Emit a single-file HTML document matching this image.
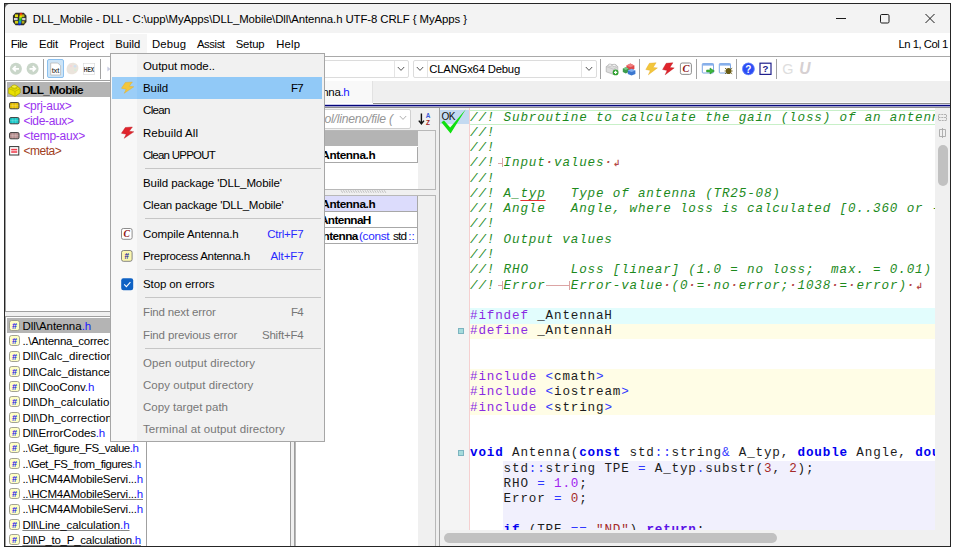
<!DOCTYPE html>
<html><head><meta charset="utf-8">
<style>
*{box-sizing:border-box;margin:0;padding:0}
html,body{width:956px;height:550px;overflow:hidden;background:#fff}
body{font-family:"Liberation Sans",sans-serif;font-size:11.3px;color:#000;position:relative}
.abs{position:absolute}
.t{position:absolute;white-space:nowrap;line-height:16px;height:16px}
#win{position:absolute;left:4px;top:3px;width:947px;height:544px;border:1px solid #262626;background:#fff;overflow:hidden}
#in{position:absolute;left:-5px;top:-4px;width:956px;height:550px}
.code{position:absolute;left:470px;top:109.8px;width:465px;height:421px;overflow:hidden;font-family:"Liberation Mono",monospace;font-size:12.6px;letter-spacing:0.84px;line-height:15.27px;white-space:pre;color:#1c1c1c}
.code .l{height:15.27px;position:relative;padding-top:0.8px}
.code i{font-style:italic;color:#1d8a1d}
.code b{font-weight:bold;color:#0000f0}
.code b.ret2{color:#5a14e6}
.c-pp{color:#8a2be2}.c-bl{color:#3038ff}.c-num{color:#a52a2a}.c-fl{color:#a020f0}.c-ws{color:#b44848;font-weight:bold}
svg{position:absolute;overflow:visible}
.code .cur{box-shadow:inset 0 1px 0 #c8f0c8, inset 0 -1px 0 #c8f0c8}
.code .cy{background:#e2fdfd}.code .ye{background:#fffde6}
.code .la{background:linear-gradient(#f1f0fd,#f1f0fd) no-repeat 32.8px 0}
.code u.tab{display:inline-block;width:8.4px;height:9px;text-decoration:none;position:relative;vertical-align:-1px}
.code u.tab:before{content:"";position:absolute;left:2.5px;right:0.6px;top:4.2px;height:0.9px;background:#dca4a4}
.code u.tab:after{content:"";position:absolute;right:0.6px;top:0;width:0.9px;height:9px;background:#dca4a4}
.code u.t3{width:25.2px}
.code u.t3:before{left:0.6px}
.code .sq{text-decoration:underline;text-decoration-color:#e83030;text-decoration-thickness:1px;text-underline-offset:3.2px;text-decoration-skip-ink:none}
.code .ret{font-style:normal;font-size:9px;font-family:"DejaVu Sans",sans-serif}

</style></head><body>
<div id="win"><div id="in">
<div class="abs" style="left:5px;top:4px;width:6px;height:6px;background:#6a6a6a;"></div>
<div class="abs" style="left:5px;top:4px;width:946px;height:29px;background:#f3f3f3;border-top-left-radius:5px"></div>
<svg style="left:11.8px;top:11.6px" width="15.6" height="14.4" viewBox="0 0 15 14">
<defs><linearGradient id="rb" x1="0" y1="0" x2="0" y2="1"><stop offset="0.05" stop-color="#e01010"/><stop offset=".3" stop-color="#f0e000"/><stop offset=".55" stop-color="#10d020"/><stop offset=".75" stop-color="#10a0e0"/><stop offset="0.95" stop-color="#1010e0"/></linearGradient></defs>
<path d="M3.4 0.8 H11.4 L14 3.6 V9.8 L11.4 12.8 H3.4 L0.8 9.8 V3.6 Z" fill="#2c2c2c"/>
<rect x="2.8" y="2.4" width="3" height="2.6" fill="#e6e010"/><rect x="9.4" y="2.4" width="2.6" height="2.6" fill="#b8b410"/>
<rect x="1.8" y="5.8" width="3.6" height="2.2" fill="#d4d4d4"/><rect x="9.8" y="5.8" width="3.2" height="2.2" fill="#d4d4d4"/>
<rect x="2.8" y="8.8" width="3" height="2.4" fill="#d8d010"/><rect x="9.4" y="8.8" width="2.6" height="2.4" fill="#b0a810"/>
<path d="M7.6 0.9 Q9.4 0.2 10 1.4 L8.6 12.2 Q7 13.6 6 12.4 Z" fill="url(#rb)"/>
</svg>
<div class="t" style="left:32.80px;top:11.00px;font-size:11.4px;letter-spacing:-0.093px;"><span style="color:#000;">DLL_Mobile - DLL - C:\upp\MyApps\DLL_Mobile\Dll\Antenna.h UTF-8 CRLF { MyApps }</span></div>
<svg style="left:830px;top:10px" width="116" height="18" viewBox="0 0 116 18">
<path d="M6 8.5 H16" stroke="#1a1a1a" stroke-width="1" fill="none"/>
<rect x="50.5" y="4.5" width="8.5" height="8.5" rx="1.2" stroke="#1a1a1a" stroke-width="1" fill="none"/>
<path d="M95.5 4 L104.5 13 M104.5 4 L95.5 13" stroke="#1a1a1a" stroke-width="1" fill="none"/>
</svg>
<div class="abs" style="left:5px;top:33px;width:946px;height:23px;background:#fff;"></div>
<div class="abs" style="left:109.5px;top:33.5px;width:37.5px;height:22px;background:#f5f5f5;"></div>
<div class="abs" style="left:5px;top:56px;width:946px;height:1px;background:#a9a9a9;"></div>
<div class="t" style="left:10.70px;top:35.80px;font-size:11.6px;letter-spacing:-0.597px;"><span style="color:#000;">File</span></div>
<div class="t" style="left:39.10px;top:35.80px;font-size:11.3px;letter-spacing:-0.157px;"><span style="color:#000;">Edit</span></div>
<div class="t" style="left:69.60px;top:35.80px;font-size:11.3px;letter-spacing:-0.112px;"><span style="color:#000;">Project</span></div>
<div class="t" style="left:115.20px;top:35.80px;font-size:11.3px;letter-spacing:-0.007px;"><span style="color:#000;">Build</span></div>
<div class="t" style="left:152.00px;top:35.80px;font-size:11.3px;letter-spacing:0.175px;"><span style="color:#000;">Debug</span></div>
<div class="t" style="left:197.00px;top:35.80px;font-size:11.3px;letter-spacing:-0.427px;"><span style="color:#000;">Assist</span></div>
<div class="t" style="left:235.80px;top:35.80px;font-size:11.3px;letter-spacing:-0.208px;"><span style="color:#000;">Setup</span></div>
<div class="t" style="left:276.30px;top:35.80px;font-size:11.3px;letter-spacing:0.153px;"><span style="color:#000;">Help</span></div>
<div class="t" style="left:898.50px;top:35.80px;font-size:11.3px;letter-spacing:-0.485px;"><span style="color:#000;">Ln 1, Col 1</span></div>
<div class="abs" style="left:5px;top:57px;width:946px;height:23.5px;background:#fff;"></div>
<svg style="left:9px;top:62px" width="32" height="14" viewBox="0 0 32 14">
<circle cx="6.9" cy="6.8" r="6" fill="#c9d6c9"/><path d="M10 6.8 H4.6 M6.8 4.2 L4.2 6.8 L6.8 9.4" stroke="#fff" stroke-width="1.8" fill="none"/>
<circle cx="23.6" cy="6.8" r="6" fill="#c9d6c9"/><path d="M20.5 6.8 H25.9 M23.7 4.2 L26.3 6.8 L23.7 9.4" stroke="#fff" stroke-width="1.8" fill="none"/>
</svg>
<div class="abs" style="left:43px;top:59px;width:1px;height:19.5px;background:#a2a2a2;"></div>
<div class="abs" style="left:47px;top:59px;width:16.8px;height:19px;background:#cce4f7;border:1px solid #8cc0ee;border-radius:2px"></div>
<svg style="left:50px;top:62px" width="12" height="14" viewBox="0 0 12 14">
<path d="M0.7 1 H7.8 L10.6 3.8 V13 H0.7 Z" fill="#fff" stroke="#b8b8b8" stroke-width="0.8"/>
<text x="5.4" y="10.6" font-family="Liberation Sans,sans-serif" font-size="7.8" text-anchor="middle" fill="#222" letter-spacing="-0.35">txt</text></svg>
<svg style="left:66px;top:62px" width="13" height="13" viewBox="0 0 13 13">
<path d="M6.5 0.8 C10 0.8 12.4 3 12.4 6 C12.4 9.6 9.4 12.3 5.8 12.3 C3 12.3 0.6 10.6 0.6 7.4 C0.6 3.6 3.2 0.8 6.5 0.8 Z" fill="#ebe4dc"/>
<circle cx="9" cy="4.2" r="1.3" fill="#cfe0f2"/><circle cx="5" cy="4" r="1.2" fill="#f3d9d9"/><circle cx="9.3" cy="8" r="1.2" fill="#d9ecd9"/></svg>
<svg style="left:83px;top:62.6px" width="12" height="12" viewBox="0 0 12 12">
<rect x="0.3" y="0.3" width="11.4" height="11" fill="#fff" stroke="#d8d8d8" stroke-width="0.6"/>
<text x="0.8" y="9" font-family="Liberation Sans,sans-serif" font-size="8" font-weight="bold" fill="#333" textLength="10.4" lengthAdjust="spacingAndGlyphs">HEX</text></svg>
<div class="abs" style="left:100px;top:59px;width:1px;height:19.5px;background:#a2a2a2;"></div>
<svg style="left:106.6px;top:66.4px" width="4" height="6" viewBox="0 0 4 6"><path d="M0.4 0.4 L3.4 3 L0.4 5.6 Z" fill="#c8cbe0"/></svg>
<div class="abs" style="left:300px;top:59.5px;width:108.5px;height:18.5px;background:#fff;border:1px solid #dcdcdc;border-radius:2px"></div>
<div class="abs" style="left:393.5px;top:60.5px;width:1px;height:16.5px;background:#e4e4e4;"></div>
<svg style="left:397px;top:66px" width="8" height="6" viewBox="0 0 8 6"><path d="M0.8 1 L4 4.4 L7.2 1" stroke="#555" stroke-width="1" fill="none"/></svg>
<div class="abs" style="left:412.5px;top:59.5px;width:184.5px;height:18.5px;background:#fff;border:1px solid #dcdcdc;border-radius:2px"></div>
<div class="abs" style="left:427px;top:60.5px;width:1px;height:16.5px;background:#e4e4e4;"></div>
<svg style="left:416px;top:66px" width="8" height="6" viewBox="0 0 8 6"><path d="M0.8 1 L4 4.4 L7.2 1" stroke="#555" stroke-width="1" fill="none"/></svg>
<div class="t" style="left:429.30px;top:60.80px;font-size:11.3px;letter-spacing:-0.207px;"><span style="color:#000;">CLANGx64 Debug</span></div>
<div class="abs" style="left:581.3px;top:60.5px;width:1px;height:16.5px;background:#e4e4e4;"></div>
<svg style="left:585px;top:66px" width="8" height="6" viewBox="0 0 8 6"><path d="M0.8 1 L4 4.4 L7.2 1" stroke="#555" stroke-width="1" fill="none"/></svg>
<div class="abs" style="left:600.2px;top:59px;width:1px;height:19.5px;background:#a2a2a2;"></div>
<div class="abs" style="left:639.4px;top:59px;width:1px;height:19.5px;background:#a2a2a2;"></div>
<div class="abs" style="left:696.4px;top:59px;width:1px;height:19.5px;background:#a2a2a2;"></div>
<div class="abs" style="left:736px;top:59px;width:1px;height:19.5px;background:#a2a2a2;"></div>
<div class="abs" style="left:776px;top:59px;width:1px;height:19.5px;background:#a2a2a2;"></div>
<svg style="left:605px;top:62px" width="210" height="14" viewBox="0 0 210 14">
<!-- gray brick + green plus -->
<path d="M1.2 4.6 L4.4 2.4 L10.6 2.6 L12.8 4.6 V9.6 L8.4 12.4 L1.2 9.8 Z" fill="#dcdcdc" stroke="#a4a4a4" stroke-width="0.6"/>
<path d="M1.2 4.6 L8.4 7.2 L12.8 4.6 M8.4 7.2 V12.4" stroke="#b4b4b4" stroke-width="0.5" fill="none"/>
<ellipse cx="5" cy="3.2" rx="1.9" ry="1.2" fill="#f2f2f2" stroke="#a8a8a8" stroke-width="0.5"/><ellipse cx="9.2" cy="3.4" rx="1.9" ry="1.2" fill="#f2f2f2" stroke="#a8a8a8" stroke-width="0.5"/>
<circle cx="10.6" cy="10.4" r="2.9" fill="#2ea02e"/><path d="M9 10.4 H12.2 M10.6 8.8 V12" stroke="#fff" stroke-width="1.1"/>
<!-- color bricks -->
<path d="M21.4 3.4 L25.4 1.6 L29.4 3.4 V7 L25.4 8.8 L21.4 7 Z" fill="#e04848"/><path d="M21.4 3.4 L25.4 1.6 L29.4 3.4 L25.4 5.2 Z" fill="#f08080"/>
<path d="M17.8 6.6 L20.8 5.2 L23.6 6.6 V10 L20.8 11.4 L17.8 10 Z" fill="#3c9c4c"/><path d="M17.8 6.6 L20.8 5.2 L23.6 6.6 L20.8 8 Z" fill="#78c888"/>
<path d="M22.8 8.4 L26.6 6.8 L30.4 8.4 V12 L26.6 13.6 L22.8 12 Z" fill="#3c78d0"/><path d="M22.8 8.4 L26.6 6.8 L30.4 8.4 L26.6 10 Z" fill="#80b0f0"/>
<!-- yellow bolt -->
<path d="M44.4 1.3 L51.1 0.8 L48.1 5.4 L52.4 5.9 L43.4 12.8 L45.3 8.4 L40.8 7.5 Z" fill="#f2c63c" stroke="#e6a820" stroke-width="0.4"/>
<!-- red bolt -->
<path d="M61.2 1.3 L67.9 0.8 L64.9 5.4 L69.2 5.9 L60.2 12.8 L62.1 8.4 L57.6 7.5 Z" fill="#e0242c" stroke="#b81820" stroke-width="0.4"/>
<!-- C icon -->
<rect x="75.4" y="1" width="11" height="11.4" rx="1.8" fill="#fff" stroke="#808080" stroke-width="0.9"/>
<text x="80.9" y="10.3" font-family="Liberation Serif,serif" font-size="10.4" font-weight="bold" font-style="italic" text-anchor="middle" fill="#8c1010">C</text>
<!-- window + arrow -->
<rect x="97.3" y="1.6" width="11.2" height="9.4" rx="0.8" fill="#fff" stroke="#6e9ce0" stroke-width="0.9"/><rect x="97.3" y="1.6" width="11.2" height="2" fill="#86b0ec"/>
<path d="M101.6 8 H105 V6 L109.4 9 L105 12 V10 H101.6 Z" fill="#3cb83c" stroke="#1e8a1e" stroke-width="0.5"/>
<!-- window + bug -->
<rect x="114.3" y="1.6" width="11.2" height="9.4" rx="0.8" fill="#fff" stroke="#6e9ce0" stroke-width="0.9"/><rect x="114.3" y="1.6" width="11.2" height="2" fill="#86b0ec"/>
<ellipse cx="123.6" cy="9" rx="2.7" ry="3.1" fill="#6a5c14"/><path d="M120 6.2 L127.2 11.8 M127.2 6.2 L120 11.8 M119.6 9 H127.6" stroke="#6a5c14" stroke-width="0.9"/>
<!-- help circle -->
<circle cx="143.4" cy="6.9" r="6.1" fill="#2c4cf4"/><circle cx="143.4" cy="6.9" r="5.9" fill="none" stroke="#6c8cff" stroke-width="0.7"/>
<text x="143.4" y="10.6" font-family="Liberation Sans,sans-serif" font-size="10" font-weight="bold" text-anchor="middle" fill="#fff">?</text>
<!-- help box -->
<rect x="155" y="1.2" width="11" height="11.2" fill="#fff" stroke="#20208c" stroke-width="1.2"/>
<text x="160.5" y="10.4" font-family="Liberation Sans,sans-serif" font-size="9.6" font-weight="bold" text-anchor="middle" fill="#20208c">?</text>
<!-- G U -->
<text x="182.8" y="11.9" font-family="Liberation Sans,sans-serif" font-size="14.4" text-anchor="middle" fill="#dedede">G</text>
<text x="199.8" y="12.4" font-family="Liberation Sans,sans-serif" font-size="15.6" font-weight="bold" font-style="italic" text-anchor="middle" fill="#d6d0d2">U</text>
</svg>
<div class="abs" style="left:5px;top:80px;width:285px;height:1px;background:#a0a0a0;"></div>
<div class="abs" style="left:5px;top:81px;width:1px;height:230px;background:#a0a0a0;"></div>
<div class="abs" style="left:6px;top:81px;width:284px;height:230px;background:#fff;"></div>
<div class="abs" style="left:7px;top:82px;width:283px;height:15px;background:#b4b4b4;"></div>
<svg style="left:8px;top:83.6px" width="13" height="13" viewBox="0 0 13 13">
<path d="M0.6 4.4 L4 2.2 L9.6 2.4 L12.2 4.6 V9 L7 12.4 L0.6 9.4 Z" fill="#e8e000" stroke="#a8a000" stroke-width="0.7"/>
<path d="M0.6 4.4 L7 7.4 L12.2 4.6 M7 7.4 V12.4" stroke="#b0a800" stroke-width="0.6" fill="none"/>
<ellipse cx="6.3" cy="2.6" rx="2.6" ry="1.5" fill="#f4f030" stroke="#a8a000" stroke-width="0.6"/>
<path d="M3.7 2.6 V4.2 C3.7 5.4 8.9 5.4 8.9 4.2 V2.6" fill="#e0d800" stroke="#a8a000" stroke-width="0.5"/>
<ellipse cx="6.3" cy="2.6" rx="2.6" ry="1.5" fill="#f6f240" stroke="#a8a000" stroke-width="0.5"/>
</svg>
<div class="t" style="left:22.20px;top:81.90px;font-size:11.8px;letter-spacing:-0.596px;font-weight:bold;"><span style="color:#000;">DLL_Mobile</span></div>
<svg style="left:9px;top:102px" width="11" height="8" viewBox="0 0 11 8">
<rect x="0.6" y="0.6" width="9.4" height="6.2" rx="1.2" fill="#e8c000" stroke="#3a3a3a" stroke-width="1"/>
<path d="M3.8 1 V6.4 M6.8 1 V6.4 M1 3.7 H9.6" stroke="#ffffff" stroke-opacity="0.35" stroke-width="0.6"/></svg>
<div class="t" style="left:23.40px;top:97.90px;font-size:12px;letter-spacing:-0.287px;"><span style="color:#9a32f0;">&lt;prj-aux&gt;</span></div>
<svg style="left:9px;top:117px" width="11" height="8" viewBox="0 0 11 8">
<rect x="0.6" y="0.6" width="9.4" height="6.2" rx="1.2" fill="#18c8c8" stroke="#3a3a3a" stroke-width="1"/>
<path d="M3.8 1 V6.4 M6.8 1 V6.4 M1 3.7 H9.6" stroke="#ffffff" stroke-opacity="0.35" stroke-width="0.6"/></svg>
<div class="t" style="left:23.40px;top:112.90px;font-size:12px;letter-spacing:-0.347px;"><span style="color:#9a32f0;">&lt;ide-aux&gt;</span></div>
<svg style="left:9px;top:132.4px" width="11" height="8" viewBox="0 0 11 8">
<rect x="0.6" y="0.6" width="9.4" height="6.2" rx="1.2" fill="#b89090" stroke="#3a3a3a" stroke-width="1"/>
<path d="M3.8 1 V6.4 M6.8 1 V6.4 M1 3.7 H9.6" stroke="#ffffff" stroke-opacity="0.35" stroke-width="0.6"/></svg>
<div class="t" style="left:23.40px;top:128.10px;font-size:12px;letter-spacing:-0.249px;"><span style="color:#9a32f0;">&lt;temp-aux&gt;</span></div>
<svg style="left:9px;top:145.6px" width="11" height="10" viewBox="0 0 11 10">
<rect x="0.6" y="0.6" width="9.2" height="8.4" fill="#fff" stroke="#333" stroke-width="1"/>
<rect x="2.2" y="2.8" width="6" height="1.6" fill="#f04050"/><rect x="2.2" y="5.2" width="6" height="1.6" fill="#f04050"/></svg>
<div class="t" style="left:23.40px;top:143.30px;font-size:12px;letter-spacing:-0.459px;"><span style="color:#a0401c;">&lt;meta&gt;</span></div>
<div class="abs" style="left:5px;top:311px;width:285px;height:7px;background:#f0f0f0;"></div>
<div class="abs" style="left:5px;top:311px;width:285px;height:1px;background:#a0a0a0;"></div>
<div class="abs" style="left:5px;top:316px;width:285px;height:1px;background:#a0a0a0;"></div>
<div class="abs" style="left:5px;top:317px;width:1px;height:230px;background:#a0a0a0;"></div>
<div class="abs" style="left:6px;top:317px;width:284px;height:230px;background:#fff;"></div>
<div class="abs" style="left:146.4px;top:317px;width:1px;height:230px;background:#a0a0a0;"></div>
<div class="abs" style="left:7px;top:318px;width:139.4px;height:15px;background:#b4b4b4;"></div>
<svg style="left:8.6px;top:319.90px" width="11" height="11" viewBox="0 0 11 11">
<rect x="0.5" y="0.5" width="10" height="10" rx="2.2" fill="#ffffc4" stroke="#98988a" stroke-width="0.9"/>
<text x="5.5" y="8.6" font-family="Liberation Sans,sans-serif" font-size="9" font-weight="bold" text-anchor="middle" fill="#2020e8">#</text></svg>
<div class="t" style="left:22.40px;top:317.80px;font-size:11.5px;letter-spacing:-0.020px;"><span style="color:#000;">Dll\Antenna</span><span style="color:#1a1aff;">.h</span></div>
<svg style="left:8.6px;top:335.20px" width="11" height="11" viewBox="0 0 11 11">
<rect x="0.5" y="0.5" width="10" height="10" rx="2.2" fill="#ffffc4" stroke="#98988a" stroke-width="0.9"/>
<text x="5.5" y="8.6" font-family="Liberation Sans,sans-serif" font-size="9" font-weight="bold" text-anchor="middle" fill="#2020e8">#</text></svg>
<div class="t" style="left:22.40px;top:333.10px;font-size:11.5px;letter-spacing:-0.261px;"><span style="color:#000;">..\Antenna_correc</span></div>
<svg style="left:8.6px;top:350.50px" width="11" height="11" viewBox="0 0 11 11">
<rect x="0.5" y="0.5" width="10" height="10" rx="2.2" fill="#ffffc4" stroke="#98988a" stroke-width="0.9"/>
<text x="5.5" y="8.6" font-family="Liberation Sans,sans-serif" font-size="9" font-weight="bold" text-anchor="middle" fill="#2020e8">#</text></svg>
<div class="t" style="left:22.40px;top:348.40px;font-size:11.5px;letter-spacing:0.066px;"><span style="color:#000;">Dll\Calc_direction</span></div>
<svg style="left:8.6px;top:365.80px" width="11" height="11" viewBox="0 0 11 11">
<rect x="0.5" y="0.5" width="10" height="10" rx="2.2" fill="#ffffc4" stroke="#98988a" stroke-width="0.9"/>
<text x="5.5" y="8.6" font-family="Liberation Sans,sans-serif" font-size="9" font-weight="bold" text-anchor="middle" fill="#2020e8">#</text></svg>
<div class="t" style="left:22.40px;top:363.70px;font-size:11.5px;letter-spacing:-0.078px;"><span style="color:#000;">Dll\Calc_distance</span></div>
<svg style="left:8.6px;top:381.10px" width="11" height="11" viewBox="0 0 11 11">
<rect x="0.5" y="0.5" width="10" height="10" rx="2.2" fill="#ffffc4" stroke="#98988a" stroke-width="0.9"/>
<text x="5.5" y="8.6" font-family="Liberation Sans,sans-serif" font-size="9" font-weight="bold" text-anchor="middle" fill="#2020e8">#</text></svg>
<div class="t" style="left:22.40px;top:379.00px;font-size:11.5px;letter-spacing:-0.112px;"><span style="color:#000;">Dll\CooConv</span><span style="color:#1a1aff;">.h</span></div>
<svg style="left:8.6px;top:396.40px" width="11" height="11" viewBox="0 0 11 11">
<rect x="0.5" y="0.5" width="10" height="10" rx="2.2" fill="#ffffc4" stroke="#98988a" stroke-width="0.9"/>
<text x="5.5" y="8.6" font-family="Liberation Sans,sans-serif" font-size="9" font-weight="bold" text-anchor="middle" fill="#2020e8">#</text></svg>
<div class="t" style="left:22.40px;top:394.30px;font-size:11.5px;letter-spacing:0.084px;"><span style="color:#000;">Dll\Dh_calculatio</span></div>
<svg style="left:8.6px;top:411.70px" width="11" height="11" viewBox="0 0 11 11">
<rect x="0.5" y="0.5" width="10" height="10" rx="2.2" fill="#ffffc4" stroke="#98988a" stroke-width="0.9"/>
<text x="5.5" y="8.6" font-family="Liberation Sans,sans-serif" font-size="9" font-weight="bold" text-anchor="middle" fill="#2020e8">#</text></svg>
<div class="t" style="left:22.40px;top:409.60px;font-size:11.5px;letter-spacing:0.088px;"><span style="color:#000;">Dll\Dh_correction</span></div>
<svg style="left:8.6px;top:427.00px" width="11" height="11" viewBox="0 0 11 11">
<rect x="0.5" y="0.5" width="10" height="10" rx="2.2" fill="#ffffc4" stroke="#98988a" stroke-width="0.9"/>
<text x="5.5" y="8.6" font-family="Liberation Sans,sans-serif" font-size="9" font-weight="bold" text-anchor="middle" fill="#2020e8">#</text></svg>
<div class="t" style="left:22.40px;top:424.90px;font-size:11.5px;letter-spacing:-0.147px;"><span style="color:#000;">Dll\ErrorCodes</span><span style="color:#1a1aff;">.h</span></div>
<svg style="left:8.6px;top:442.30px" width="11" height="11" viewBox="0 0 11 11">
<rect x="0.5" y="0.5" width="10" height="10" rx="2.2" fill="#ffffc4" stroke="#98988a" stroke-width="0.9"/>
<text x="5.5" y="8.6" font-family="Liberation Sans,sans-serif" font-size="9" font-weight="bold" text-anchor="middle" fill="#2020e8">#</text></svg>
<div class="t" style="left:22.40px;top:440.20px;font-size:11.5px;letter-spacing:-0.498px;"><span style="color:#000;">..\Get_figure_FS_value</span><span style="color:#1a1aff;">.h</span></div>
<svg style="left:8.6px;top:457.60px" width="11" height="11" viewBox="0 0 11 11">
<rect x="0.5" y="0.5" width="10" height="10" rx="2.2" fill="#ffffc4" stroke="#98988a" stroke-width="0.9"/>
<text x="5.5" y="8.6" font-family="Liberation Sans,sans-serif" font-size="9" font-weight="bold" text-anchor="middle" fill="#2020e8">#</text></svg>
<div class="t" style="left:22.40px;top:455.50px;font-size:11.5px;letter-spacing:-0.448px;"><span style="color:#000;">..\Get_FS_from_figures</span><span style="color:#1a1aff;">.h</span></div>
<svg style="left:8.6px;top:472.90px" width="11" height="11" viewBox="0 0 11 11">
<rect x="0.5" y="0.5" width="10" height="10" rx="2.2" fill="#ffffc4" stroke="#98988a" stroke-width="0.9"/>
<text x="5.5" y="8.6" font-family="Liberation Sans,sans-serif" font-size="9" font-weight="bold" text-anchor="middle" fill="#2020e8">#</text></svg>
<div class="t" style="left:22.40px;top:470.80px;font-size:11.5px;letter-spacing:-0.232px;"><span style="color:#000;">..\HCM4AMobileServi...</span><span style="color:#1a1aff;">h</span></div>
<svg style="left:8.6px;top:488.20px" width="11" height="11" viewBox="0 0 11 11">
<rect x="0.5" y="0.5" width="10" height="10" rx="2.2" fill="#ffffc4" stroke="#98988a" stroke-width="0.9"/>
<text x="5.5" y="8.6" font-family="Liberation Sans,sans-serif" font-size="9" font-weight="bold" text-anchor="middle" fill="#2020e8">#</text></svg>
<div class="t" style="left:22.40px;top:486.10px;font-size:11.5px;letter-spacing:-0.232px;text-decoration:underline;text-decoration-thickness:0.8px;text-underline-offset:1.2px;text-decoration-color:#888;"><span style="color:#000;">..\HCM4AMobileServi...</span><span style="color:#1a1aff;">h</span></div>
<svg style="left:8.6px;top:503.50px" width="11" height="11" viewBox="0 0 11 11">
<rect x="0.5" y="0.5" width="10" height="10" rx="2.2" fill="#ffffc4" stroke="#98988a" stroke-width="0.9"/>
<text x="5.5" y="8.6" font-family="Liberation Sans,sans-serif" font-size="9" font-weight="bold" text-anchor="middle" fill="#2020e8">#</text></svg>
<div class="t" style="left:22.40px;top:501.40px;font-size:11.5px;letter-spacing:-0.232px;"><span style="color:#000;">..\HCM4AMobileServi...</span><span style="color:#1a1aff;">h</span></div>
<svg style="left:8.6px;top:518.80px" width="11" height="11" viewBox="0 0 11 11">
<rect x="0.5" y="0.5" width="10" height="10" rx="2.2" fill="#ffffc4" stroke="#98988a" stroke-width="0.9"/>
<text x="5.5" y="8.6" font-family="Liberation Sans,sans-serif" font-size="9" font-weight="bold" text-anchor="middle" fill="#2020e8">#</text></svg>
<div class="t" style="left:22.40px;top:516.70px;font-size:11.5px;letter-spacing:-0.070px;text-decoration:underline;text-decoration-thickness:0.8px;text-underline-offset:1.2px;text-decoration-color:#888;"><span style="color:#000;">Dll\Line_calculation</span><span style="color:#1a1aff;">.h</span></div>
<svg style="left:8.6px;top:534.10px" width="11" height="11" viewBox="0 0 11 11">
<rect x="0.5" y="0.5" width="10" height="10" rx="2.2" fill="#ffffc4" stroke="#98988a" stroke-width="0.9"/>
<text x="5.5" y="8.6" font-family="Liberation Sans,sans-serif" font-size="9" font-weight="bold" text-anchor="middle" fill="#2020e8">#</text></svg>
<div class="t" style="left:22.40px;top:532.00px;font-size:11.5px;letter-spacing:-0.255px;text-decoration:underline;text-decoration-thickness:0.8px;text-underline-offset:1.2px;text-decoration-color:#888;"><span style="color:#000;">Dll\P_to_P_calculation</span><span style="color:#1a1aff;">.h</span></div>
<div class="abs" style="left:289.5px;top:80px;width:5.5px;height:467px;background:#f0f0f0;"></div>
<div class="abs" style="left:289.5px;top:80px;width:1px;height:467px;background:#9c9c9c;"></div>
<div class="abs" style="left:294.3px;top:80px;width:1px;height:467px;background:#9c9c9c;"></div>
<div class="abs" style="left:295px;top:80.5px;width:656px;height:21.5px;background:#efefef;"></div>
<div class="abs" style="left:295px;top:102px;width:656px;height:1px;background:#fbfbfb;"></div>
<div class="abs" style="left:295px;top:103px;width:656px;height:1px;background:#8e8e8e;"></div>
<div class="abs" style="left:296px;top:81px;width:77.4px;height:23px;background:#f9f9f9;border-right:1px solid #e2e2e2"></div>
<div class="abs" style="left:296px;top:103px;width:77.4px;height:1px;background:#fff;"></div>
<div class="t" style="left:300.00px;top:84.20px;font-size:11.5px;letter-spacing:-0.342px;"><span style="color:#000;">Antenna</span><span style="color:#1a1aff;">.h</span></div>
<div class="abs" style="left:295px;top:104px;width:656px;height:1px;background:#c9c9e6;"></div>
<div class="abs" style="left:295px;top:105px;width:656px;height:1px;background:#05057c;"></div>
<div class="abs" style="left:295px;top:106px;width:656px;height:1px;background:#a0a0cc;"></div>
<div class="abs" style="left:295px;top:107px;width:656px;height:1px;background:#8f8f8f;"></div>
<div class="abs" style="left:295px;top:108px;width:656px;height:1px;background:#d0d0d0;"></div>
<div class="abs" style="left:295px;top:108.4px;width:145px;height:438px;background:#f0f0f0;"></div>
<div class="abs" style="left:295px;top:108.5px;width:115.5px;height:20px;background:#fff;border:1px solid #d0d0d0;border-radius:2px"></div>
<div class="t" style="left:294.10px;top:110.80px;font-size:12.2px;letter-spacing:-0.204px;font-style:italic;"><span style="color:#969696;">Symbol/lineno/file (</span></div>
<svg style="left:399px;top:115px" width="8" height="6" viewBox="0 0 8 6"><path d="M0.8 1 L4 4.4 L7.2 1" stroke="#b0b0b0" stroke-width="1" fill="none"/></svg>
<svg style="left:418px;top:112.6px" width="14" height="13" viewBox="0 0 14 13">
<path d="M3.4 0.6 V10 M0.8 7.6 L3.4 10.8 L6 7.6" stroke="#111" stroke-width="1.4" fill="none"/>
<text x="10" y="5.4" font-family="Liberation Sans,sans-serif" font-size="6.4" font-weight="bold" text-anchor="middle" fill="#3a5ad8">A</text>
<text x="10" y="11.8" font-family="Liberation Sans,sans-serif" font-size="6.4" font-weight="bold" text-anchor="middle" fill="#a01c1c">Z</text></svg>
<div class="abs" style="left:295px;top:129.5px;width:141px;height:60px;background:#fff;border:1px solid #b8b8b8"></div>
<div class="abs" style="left:418px;top:130.5px;width:16.5px;height:58px;background:#f0f0f0;"></div>
<div class="abs" style="left:296px;top:131.3px;width:122px;height:15.2px;background:#b4b4b4;"></div>
<div class="abs" style="left:296px;top:146.5px;width:122px;height:16px;background:#fff;border:1px solid #a8a8a8;border-top:none"></div>
<div class="t" style="left:321.30px;top:147.10px;font-size:11.8px;letter-spacing:-0.423px;font-weight:bold;"><span style="color:#000;">Antenna.h</span></div>
<svg style="left:340px;top:190.4px" width="48" height="3" viewBox="0 0 48 3"><path d="M1.0 0.2 L2.6 2.8" stroke="#b4b4b4" stroke-width="0.8"/><path d="M3.4 0.2 L5.0 2.8" stroke="#b4b4b4" stroke-width="0.8"/><path d="M5.8 0.2 L7.4 2.8" stroke="#b4b4b4" stroke-width="0.8"/><path d="M8.2 0.2 L9.8 2.8" stroke="#b4b4b4" stroke-width="0.8"/><path d="M10.6 0.2 L12.2 2.8" stroke="#b4b4b4" stroke-width="0.8"/><path d="M13.0 0.2 L14.6 2.8" stroke="#b4b4b4" stroke-width="0.8"/><path d="M15.4 0.2 L17.0 2.8" stroke="#b4b4b4" stroke-width="0.8"/><path d="M17.8 0.2 L19.4 2.8" stroke="#b4b4b4" stroke-width="0.8"/><path d="M20.2 0.2 L21.8 2.8" stroke="#b4b4b4" stroke-width="0.8"/><path d="M22.6 0.2 L24.2 2.8" stroke="#b4b4b4" stroke-width="0.8"/><path d="M25.0 0.2 L26.6 2.8" stroke="#b4b4b4" stroke-width="0.8"/><path d="M27.4 0.2 L29.0 2.8" stroke="#b4b4b4" stroke-width="0.8"/><path d="M29.8 0.2 L31.4 2.8" stroke="#b4b4b4" stroke-width="0.8"/><path d="M32.2 0.2 L33.8 2.8" stroke="#b4b4b4" stroke-width="0.8"/><path d="M34.6 0.2 L36.2 2.8" stroke="#b4b4b4" stroke-width="0.8"/><path d="M37.0 0.2 L38.6 2.8" stroke="#b4b4b4" stroke-width="0.8"/><path d="M39.4 0.2 L41.0 2.8" stroke="#b4b4b4" stroke-width="0.8"/><path d="M41.8 0.2 L43.4 2.8" stroke="#b4b4b4" stroke-width="0.8"/><path d="M44.2 0.2 L45.8 2.8" stroke="#b4b4b4" stroke-width="0.8"/></svg>
<div class="abs" style="left:295px;top:194.5px;width:141px;height:352px;background:#fff;border:1px solid #b8b8b8;border-bottom:none"></div>
<div class="abs" style="left:418px;top:195.5px;width:16.5px;height:351px;background:#f0f0f0;"></div>
<div class="abs" style="left:296px;top:196px;width:122px;height:16px;background:#dcdcfc;border-bottom:1px solid #a8a8a8;border-right:1px solid #a8a8a8"></div>
<div class="abs" style="left:296px;top:212px;width:122px;height:16px;background:#fff;border-bottom:1px solid #a8a8a8;border-right:1px solid #a8a8a8"></div>
<div class="abs" style="left:296px;top:228px;width:122px;height:16px;background:#fff;border-bottom:1px solid #a8a8a8;border-right:1px solid #a8a8a8"></div>
<div class="t" style="left:321.30px;top:196.30px;font-size:11.8px;letter-spacing:-0.423px;font-weight:bold;"><span style="color:#000;">Antenna.h</span></div>
<div class="t" style="left:314.00px;top:212.10px;font-size:11.8px;letter-spacing:-0.611px;font-weight:bold;"><span style="color:#000;">_AntennaH</span></div>
<div class="t" style="left:314.50px;top:228.10px;font-size:11.8px;letter-spacing:-0.550px;font-weight:bold;"><span style="color:#000;">Antenna</span></div>
<div class="t" style="left:358.90px;top:228.10px;font-size:11.8px;letter-spacing:-0.287px;"><span style="color:#2a2aff;">(const</span></div>
<div class="t" style="left:393.00px;top:228.10px;font-size:11.8px;letter-spacing:-0.871px;"><span style="color:#000;">std</span></div>
<div class="t" style="left:408.30px;top:228.10px;font-size:11.8px;letter-spacing:0.000px;"><span style="color:#2a2aff;">::</span></div>
<div class="abs" style="left:436px;top:108.4px;width:3.3px;height:438px;background:#efefef;"></div>
<div class="abs" style="left:439.3px;top:108.4px;width:1px;height:438px;background:#a4a4a4;"></div>
<div class="abs" style="left:440.3px;top:108.4px;width:29px;height:423px;background:#f4f4f4;"></div>
<div class="abs" style="left:469.3px;top:108.4px;width:465.7px;height:423px;background:#fff;"></div>
<div class="abs" style="left:469px;top:108.4px;width:0.8px;height:423px;background:#f5d0d0;"></div>
<div class="abs" style="left:440.3px;top:109.6px;width:29px;height:14.6px;background:#c3daf1;"></div>
<svg style="left:441px;top:108px" width="28" height="26" viewBox="0 0 28 26">
<text x="0.4" y="12" font-family="Liberation Sans,sans-serif" font-size="10" fill="#111" letter-spacing="-0.5">OK</text>
<path d="M0.4 14.2 L3 12.4 L9.2 19.4 L24.8 1.2 L9.6 25.4 Z" fill="#10e010"/>
</svg>
<div class="abs" style="left:458px;top:328px;width:5.6px;height:5.8px;background:#a6dcdc;border:0.8px solid #7cb4c0"></div>
<div class="abs" style="left:458px;top:449.8px;width:5.6px;height:5.8px;background:#a6dcdc;border:0.8px solid #7cb4c0"></div>
<div class="code"><div class="l cur"><i>//! Subroutine to calculate the gain (loss) of an antenna</i></div><div class="l "><i>//!</i></div><div class="l "><i>//!</i></div><div class="l "><i>//!<u class="tab"></u>Input<span class="c-ws">·</span>values<span class="c-ws">·</span><span class="c-ws ret">↲</span></i></div><div class="l "><i>//!</i></div><div class="l "><i>//! A_<span class="sq">typ</span>   Type of antenna (TR25-08)</i></div><div class="l "><i>//! Angle   Angle, where loss is calculated [0..360 or -180</i></div><div class="l "><i>//!</i></div><div class="l "><i>//! Output values</i></div><div class="l "><i>//!</i></div><div class="l "><i>//! RHO     Loss [linear] (1.0 = no loss;  max. = 0.01)</i></div><div class="l "><i>//!<u class="tab"></u>Error<u class="tab t3"></u>Error-value<span class="c-ws">·</span>(0<span class="c-ws">·</span>=<span class="c-ws">·</span>no<span class="c-ws">·</span>error;<span class="c-ws">·</span>1038<span class="c-ws">·</span>=<span class="c-ws">·</span>error)<span class="c-ws">·</span><span class="c-ws ret">↲</span></i></div><div class="l "> </div><div class="l cy"><span class="c-pp">#ifndef</span> _AntennaH</div><div class="l ye"><span class="c-pp">#define</span> _AntennaH</div><div class="l "> </div><div class="l "> </div><div class="l ye"><span class="c-pp">#include</span> <span class="c-bl">&lt;</span>cmath<span class="c-bl">&gt;</span></div><div class="l ye"><span class="c-pp">#include</span> <span class="c-bl">&lt;</span>iostream<span class="c-bl">&gt;</span></div><div class="l ye"><span class="c-pp">#include</span> <span class="c-bl">&lt;</span>string<span class="c-bl">&gt;</span></div><div class="l "> </div><div class="l "> </div><div class="l "><b>void</b> Antenna(<b>const</b> std<span class="c-bl">::</span>string<span class="c-bl">&amp;</span> A_typ, <b>double</b> Angle, <b>double</b></div><div class="l la">    <span class="blk">std<span class="c-bl">::</span>string TPE <span class="c-bl">=</span> A_typ<span class="c-bl">.</span>substr(<span class="c-num">3</span>, <span class="c-num">2</span>);</span></div><div class="l la">    RHO <span class="c-bl">=</span> <span class="c-fl">1.0</span>;</div><div class="l la">    Error <span class="c-bl">=</span> <span class="c-num">0</span>;</div><div class="l la"> </div><div class="l la">    <b>if</b> (TPE <span class="c-bl">==</span> <span class="c-num">"ND"</span>) <b class="ret2">return</b>;</div></div>
<div class="abs" style="left:935px;top:108.4px;width:15px;height:438px;background:#f0f0f0;"></div>
<svg style="left:938px;top:113px" width="10" height="26" viewBox="0 0 10 26">
<path d="M0.5 1.5 H8.5 V7.5 H0.5 Z M0.5 4.5 H8.5" stroke="#a8a8a8" stroke-width="0.9" fill="none" stroke-dasharray="2 0.8"/>
<path d="M1.5 16.5 H7.5 V23.5 H1.5 Z M4.5 15 V25" stroke="#a8a8a8" stroke-width="0.9" fill="none"/>
</svg>
<div class="abs" style="left:938px;top:144.5px;width:9.8px;height:41px;background:#c1c1c1;border-radius:5px"></div>
<div class="abs" style="left:440.3px;top:530.4px;width:494.7px;height:16px;background:#f0f0f0;"></div>
<div class="abs" style="left:444px;top:533.2px;width:333.3px;height:9.6px;background:#c1c1c1;border-radius:5px"></div>
<div class="abs" style="left:110px;top:52.8px;width:215px;height:389px;background:#f1f1f1;border:1px solid #a6a6a6"></div>
<div class="abs" style="left:111.2px;top:53.8px;width:25.8px;height:387px;background:#f8f8f8;"></div>
<div class="t" style="left:143.00px;top:58.20px;font-size:11.5px;letter-spacing:-0.073px;"><span style="color:#000;">Output mode..</span></div>
<div class="abs" style="left:112px;top:77.35px;width:210px;height:21.8px;background:#91c9f7;"></div>
<div class="abs" style="left:112px;top:77.35px;width:25px;height:21.8px;background:#9bcef8;"></div>
<div class="t" style="left:143.00px;top:80.30px;font-size:11.5px;letter-spacing:-0.093px;"><span style="color:#000;">Build</span></div>
<div class="t" style="left:291.08px;top:80.30px;font-size:11.5px;letter-spacing:-0.900px;"><span style="color:#000;">F7</span></div>
<div class="t" style="left:143.00px;top:102.40px;font-size:11.5px;letter-spacing:-0.637px;"><span style="color:#000;">Clean</span></div>
<div class="t" style="left:143.00px;top:124.50px;font-size:11.5px;letter-spacing:0.066px;"><span style="color:#000;">Rebuild All</span></div>
<div class="t" style="left:143.00px;top:146.60px;font-size:11.5px;letter-spacing:-0.760px;"><span style="color:#000;">Clean UPPOUT</span></div>
<div class="abs" style="left:144.5px;top:167.89999999999998px;width:176.5px;height:1px;background:#c6c6c6;"></div>
<div class="t" style="left:143.00px;top:175.00px;font-size:11.5px;letter-spacing:-0.092px;"><span style="color:#000;">Build package &#x27;DLL_Mobile&#x27;</span></div>
<div class="t" style="left:143.00px;top:197.10px;font-size:11.5px;letter-spacing:-0.199px;"><span style="color:#000;">Clean package &#x27;DLL_Mobile&#x27;</span></div>
<div class="abs" style="left:144.5px;top:218.39999999999998px;width:176.5px;height:1px;background:#c6c6c6;"></div>
<div class="t" style="left:143.00px;top:225.50px;font-size:11.5px;letter-spacing:-0.092px;"><span style="color:#000;">Compile Antenna.h</span></div>
<div class="t" style="left:267.20px;top:225.50px;font-size:11.5px;letter-spacing:-0.270px;"><span style="color:#2a2aff;">Ctrl+F7</span></div>
<div class="t" style="left:143.00px;top:247.60px;font-size:11.5px;letter-spacing:-0.319px;"><span style="color:#000;">Preprocess Antenna.h</span></div>
<div class="t" style="left:270.50px;top:247.60px;font-size:11.5px;letter-spacing:-0.091px;"><span style="color:#2a2aff;">Alt+F7</span></div>
<div class="abs" style="left:144.5px;top:268.9px;width:176.5px;height:1px;background:#c6c6c6;"></div>
<div class="t" style="left:143.00px;top:276.00px;font-size:11.5px;letter-spacing:-0.105px;"><span style="color:#000;">Stop on errors</span></div>
<div class="abs" style="left:144.5px;top:297.3px;width:176.5px;height:1px;background:#c6c6c6;"></div>
<div class="t" style="left:143.00px;top:304.40px;font-size:11.5px;letter-spacing:-0.141px;"><span style="color:#777;">Find next error</span></div>
<div class="t" style="left:291.08px;top:304.40px;font-size:11.5px;letter-spacing:-0.900px;"><span style="color:#777;">F4</span></div>
<div class="t" style="left:143.00px;top:326.50px;font-size:11.5px;letter-spacing:-0.123px;"><span style="color:#777;">Find previous error</span></div>
<div class="t" style="left:262.00px;top:326.50px;font-size:11.5px;letter-spacing:-0.221px;"><span style="color:#777;">Shift+F4</span></div>
<div class="abs" style="left:144.5px;top:347.80000000000007px;width:176.5px;height:1px;background:#c6c6c6;"></div>
<div class="t" style="left:143.00px;top:354.90px;font-size:11.5px;letter-spacing:0.070px;"><span style="color:#777;">Open output directory</span></div>
<div class="t" style="left:143.00px;top:377.00px;font-size:11.5px;letter-spacing:0.050px;"><span style="color:#777;">Copy output directory</span></div>
<div class="t" style="left:143.00px;top:399.10px;font-size:11.5px;letter-spacing:-0.002px;"><span style="color:#777;">Copy target path</span></div>
<div class="t" style="left:143.00px;top:421.20px;font-size:11.5px;letter-spacing:0.111px;"><span style="color:#777;">Terminal at output directory</span></div>
<svg style="left:120.5px;top:82.40px" width="13" height="12" viewBox="0 0 13 12">
<path d="M4.3 0.5 L11.4 0 L8.2 4.3 L12.8 4.8 L3.2 11.3 L5.2 7.2 L0.4 6.3 Z" fill="#f2c63c" stroke="#e6a820" stroke-width="0.4"/></svg>
<svg style="left:120.5px;top:126.60px" width="13" height="12" viewBox="0 0 13 12">
<path d="M4.3 0.5 L11.4 0 L8.2 4.3 L12.8 4.8 L3.2 11.3 L5.2 7.2 L0.4 6.3 Z" fill="#e0242c" stroke="#b81820" stroke-width="0.4"/></svg>
<svg style="left:121.4px;top:227.80px" width="12" height="12" viewBox="0 0 12 12">
<rect x="0.5" y="0.5" width="10.6" height="10.8" rx="1.8" fill="#fff" stroke="#808080" stroke-width="0.9"/>
<text x="5.8" y="9.4" font-family="Liberation Serif,serif" font-size="9.6" font-weight="bold" font-style="italic" text-anchor="middle" fill="#8c1010">C</text></svg>
<svg style="left:121.4px;top:249.90px" width="12" height="12" viewBox="0 0 12 12">
<rect x="0.5" y="0.5" width="10.6" height="10.8" rx="2" fill="#fbf7b0" stroke="#6a6a6a" stroke-width="0.8"/>
<text x="5.8" y="8.8" font-family="Liberation Sans,sans-serif" font-size="8.2" font-weight="bold" text-anchor="middle" fill="#20209c">#</text></svg>
<svg style="left:121px;top:277.70px" width="13" height="13" viewBox="0 0 13 13">
<rect x="0.2" y="0.2" width="12" height="12" rx="2.2" fill="#0f62c4"/>
<path d="M3.2 6.4 L5.4 8.6 L9.4 4.2" stroke="#fff" stroke-width="1.1" fill="none"/></svg>
</div></div>
</body></html>
